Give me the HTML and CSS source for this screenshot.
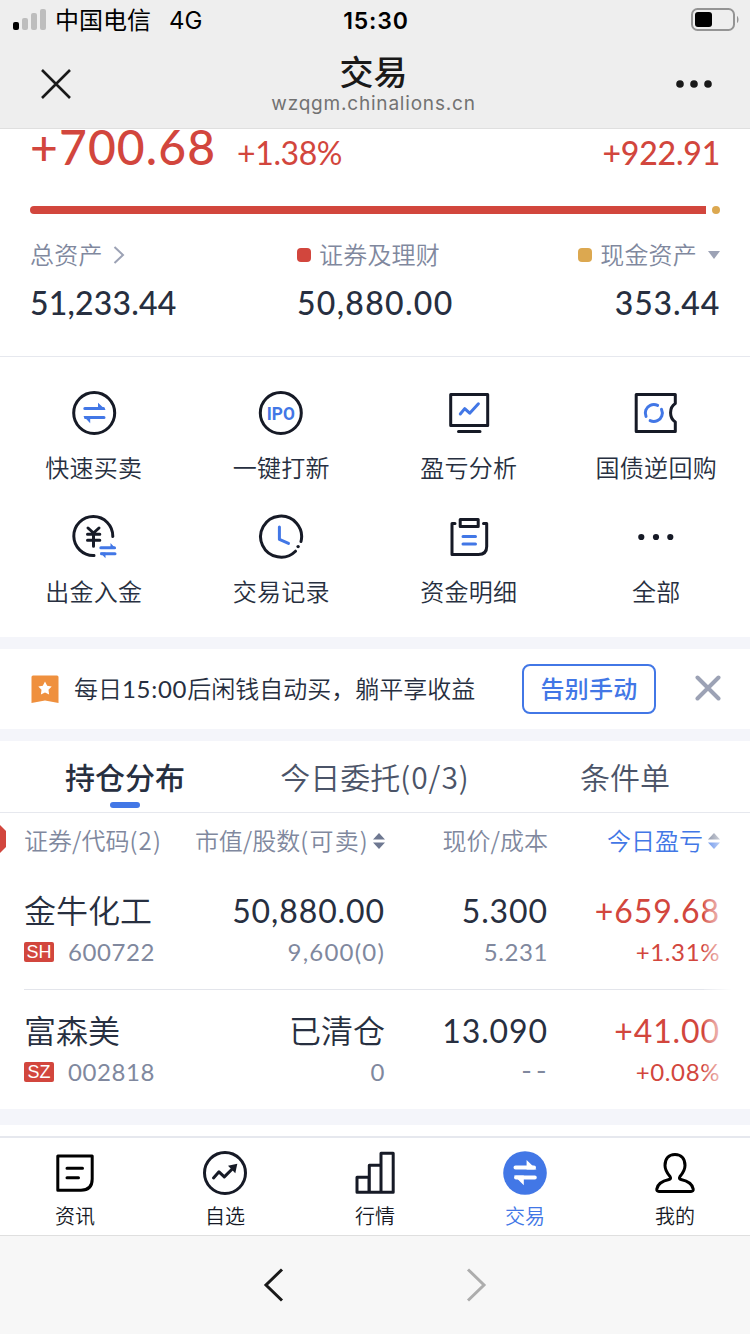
FILE: index.html
```html
<!DOCTYPE html>
<html lang="zh-CN">
<head>
    <meta charset="UTF-8">
    <meta name="viewport" content="width=device-width, initial-scale=1.0">
    <title>交易</title>
    <link rel="stylesheet" href="styles.css">
</head>
<body>
    <!-- Status bar -->
    <div class="status-bar">
        <div class="carrier">
            <svg class="signal" width="34" height="22" viewBox="0 0 34 22">
                <rect x="0" y="13" width="6" height="8" rx="2" fill="#000"/>
                <rect x="9" y="9" width="6" height="12" rx="2" fill="#bdbdbd"/>
                <rect x="18" y="4" width="6" height="17" rx="2" fill="#bdbdbd"/>
                <rect x="27" y="0" width="6" height="21" rx="2" fill="#bdbdbd"/>
            </svg>
            <span class="carrier-name">中国电信</span>
            <span class="network">4G</span>
        </div>
        <div class="time">15:30</div>
        <svg class="battery" width="48" height="24" viewBox="0 0 48 24">
            <rect x="1" y="1" width="42" height="21" rx="5.5" fill="none" stroke="#949494" stroke-width="2"/>
            <rect x="4" y="4" width="17" height="15" rx="3" fill="#000"/>
            <path d="M46 8c2 1 2 6 0 7z" fill="#949494"/>
        </svg>
    </div>

    <!-- Header -->
    <header class="header">
        <svg class="close" width="32" height="32" viewBox="0 0 32 32">
            <path d="M2 2L30 30M30 2L2 30"/>
        </svg>
        <div class="title-box">
            <h1>交易</h1>
            <p>wzqgm.chinalions.cn</p>
        </div>
        <svg class="more" width="38" height="10" viewBox="0 0 38 10">
            <circle cx="5" cy="5" r="3.8"/>
            <circle cx="19" cy="5" r="3.8"/>
            <circle cx="33" cy="5" r="3.8"/>
        </svg>
    </header>

    <!-- Assets -->
    <section class="assets">
        <div class="profit">
            <span class="profit-main">+700.68</span>
            <span class="profit-rate">+1.38%</span>
            <span class="profit-today">+922.91</span>
        </div>
        <div class="ratio">
            <div class="ratio-stock"></div>
            <div class="ratio-cash"></div>
        </div>
        <div class="asset-list">
            <div class="asset">
                <div class="asset-label">总资产
                    <svg class="arrow" width="12" height="20" viewBox="0 0 12 20"><path d="M1.5 2L10 10L1.5 18"/></svg>
                </div>
                <div class="asset-value total">51,233.44</div>
            </div>
            <div class="asset">
                <div class="asset-label"><i class="dot red"></i>证券及理财</div>
                <div class="asset-value">50,880.00</div>
            </div>
            <div class="asset asset-right">
                <div class="asset-label"><i class="dot gold"></i>现金资产<i class="caret"></i></div>
                <div class="asset-value cash">353.44</div>
            </div>
        </div>
    </section>

    <!-- Menu -->
    <section class="menu">
        <div class="menu-item">
            <svg class="icon" viewBox="0 0 48 48">
                <circle cx="24.2" cy="24" r="20.5"/>
                <path class="blue" d="M14.8 19.4H33.5M15.5 28.6H34"/>
                <path class="blue-fill" d="M28 13.7L35.8 20.9H28zM20.2 34.3L13.3 27.1H20.2z"/>
            </svg>
            <span>快速买卖</span>
        </div>
        <div class="menu-item">
            <svg class="icon" viewBox="0 0 48 48">
                <circle cx="23.8" cy="24" r="20.5"/>
                <text class="ipo" x="23.8" y="30.8" text-anchor="middle" textLength="28" lengthAdjust="spacingAndGlyphs">IPO</text>
            </svg>
            <span>一键打新</span>
        </div>
        <div class="menu-item">
            <svg class="icon" viewBox="0 0 48 48">
                <path d="M5.7 5.5H42.7V36.5H5.7zM13.5 42.5H35"/>
                <path class="blue" d="M15.3 25L19.7 19.6L24.7 24.2L33.4 14.8"/>
            </svg>
            <span>盈亏分析</span>
        </div>
        <div class="menu-item">
            <svg class="icon" viewBox="0 0 48 48">
                <path d="M43.3 5.5H4.2V42.5H43.3V33C37 29 37 18.5 43.3 14.5z"/>
                <circle class="blue" cx="21.8" cy="24" r="8.5" stroke-dasharray="20.7 6" transform="rotate(-25 21.8 24)"/>
            </svg>
            <span>国债逆回购</span>
        </div>
        <div class="menu-item">
            <svg class="icon" viewBox="0 0 48 48">
                <path d="M42.8 23.5A19.5 19.5 0 1 0 24 42.5"/>
                <path d="M18 15L23.5 20L29 15M17.5 21.2H29.8M17.5 27.2H29.8M23.5 21V33.2"/>
                <path class="blue" d="M30.8 34.7H44.5M31.5 40.7H45"/>
                <path class="blue-fill" d="M40.5 30L46 36H40.5zM35.5 45.3L30 39.5H35.5z"/>
            </svg>
            <span>出金入金</span>
        </div>
        <div class="menu-item">
            <svg class="icon" viewBox="0 0 48 48">
                <path d="M44 28.5A20.5 20.5 0 1 0 38.5 38.2"/>
                <circle class="dark-fill" cx="41.1" cy="33.6" r="1.7"/>
                <path class="blue" d="M22.4 14V26.4L31.5 30.4"/>
            </svg>
            <span>交易记录</span>
        </div>
        <div class="menu-item">
            <svg class="icon" viewBox="0 0 48 48">
                <path d="M10 10.5H7V41.5H33.5Q41.7 41.5 41.7 33.5V10.5H38.5"/>
                <rect x="15.2" y="6.5" width="18" height="7"/>
                <path class="blue" d="M18 23.5H30.5M18 31H30.5"/>
            </svg>
            <span>资金明细</span>
        </div>
        <div class="menu-item">
            <svg class="icon" viewBox="0 0 48 48">
                <g class="dark-fill"><circle cx="9.3" cy="24" r="3.1"/><circle cx="24" cy="24" r="3.1"/><circle cx="38.3" cy="24" r="3.1"/></g>
            </svg>
            <span>全部</span>
        </div>
    </section>

    <!-- Notice -->
    <section class="notice">
        <svg class="badge" width="28" height="29" viewBox="0 0 28 29">
            <path d="M2 .5H26Q27.5 .5 27.5 2V28L14 25.5L.5 28V2Q.5 .5 2 .5z" fill="#ef903e"/>
            <path d="M14 6.5L16.2 10.7L20.7 11.5L17.5 14.8L18.1 19.4L14 17.4L9.9 19.4L10.5 14.8L7.3 11.5L11.8 10.7z" fill="#fff"/>
        </svg>
        <span class="notice-text">每日<span class="clock">15:00</span>后闲钱自动买，躺平享收益</span>
        <button class="notice-btn">告别手动</button>
        <svg class="notice-close" width="26" height="26" viewBox="0 0 26 26"><path d="M2.5 2.5L23.5 23.5M23.5 2.5L2.5 23.5"/></svg>
    </section>

    <!-- Holdings -->
    <section class="holdings">
        <nav class="tabs">
            <div class="tab active">持仓分布</div>
            <div class="tab"><span>今日委托<span class="count">(0/3)</span></span></div>
            <div class="tab">条件单</div>
        </nav>
        <div class="table">
            <div class="tag"></div>
            <div class="thead">
                <div>证券/代码<span class="count">(2)</span></div>
                <div>市值/股数<span class="count">(可卖)</span><svg class="sort" width="12" height="16" viewBox="0 0 12 16"><path d="M0 6.5L6 0L12 6.5zM0 9.5H12L6 16z" fill="#6e7891"/></svg></div>
                <div>现价/成本</div>
                <div class="sorted">今日盈亏<svg class="sort" width="12" height="16" viewBox="0 0 12 16"><path d="M0 6.5L6 0L12 6.5z" fill="#6e7891"/><path d="M0 9.5H12L6 16z" fill="#4277e6"/></svg></div>
            </div>
            <div class="row">
                <div><p class="name">金牛化工</p><p class="code"><b>SH</b>600722</p></div>
                <div><p>50,880.00</p><p class="shares">9,600(0)</p></div>
                <div><p>5.300</p><p>5.231</p></div>
                <div class="up"><p>+659.68</p><p>+1.31%</p></div>
            </div>
            <div class="row">
                <div><p class="name">富森美</p><p class="code"><b>SZ</b>002818</p></div>
                <div><p class="name">已清仓</p><p>0</p></div>
                <div><p>13.090</p><p class="none">--</p></div>
                <div class="up"><p>+41.00</p><p>+0.08%</p></div>
            </div>
            <div class="fade"></div>
        </div>
    </section>

    <!-- Bottom navigation -->
    <nav class="bottom-nav">
        <div class="nav-item">
            <svg class="icon black" viewBox="0 0 48 48">
                <path d="M6.8 7H41.2V30Q41.2 41.2 30 41.2H6.8zM16 19.2H31.5M16 28.8H27.5"/>
            </svg>
            <span>资讯</span>
        </div>
        <div class="nav-item">
            <svg class="icon" viewBox="0 0 48 48">
                <circle cx="24" cy="24" r="20.5"/>
                <path d="M12.5 29L18 22.8L23.3 27.9L32 19.2"/>
                <path class="dark-fill" d="M36.3 14.8L27 16.8L34.3 24.3z"/>
            </svg>
            <span>自选</span>
        </div>
        <div class="nav-item">
            <svg class="icon" viewBox="0 0 48 48">
                <path d="M6 28.3H18V43.2H6zM18.3 16.3H30V43.2H18.3zM30 4.3H42.2V43.2H30z"/>
            </svg>
            <span>行情</span>
        </div>
        <div class="nav-item active">
            <svg class="icon" viewBox="0 0 48 48">
                <circle class="blue-fill" cx="24" cy="24" r="21.8"/>
                <path class="white" d="M14.5 18.5H33M15 28.5H33.8"/>
                <path class="white-fill" d="M25.6 11L35.5 20.5H25.6zM22.8 36.2L13 26.5H22.8z"/>
            </svg>
            <span>交易</span>
        </div>
        <div class="nav-item">
            <svg class="icon black" viewBox="0 0 48 48">
                <path d="M24 5.5C17.5 5.5 14 10 14 16.5C14 21.5 16 24 19 27.5Q20.5 30 18 30.5C11 32 6.5 35.5 5.8 40Q5.5 42.5 8 42.5H40Q42.5 42.5 42.2 40C41.5 35.5 37 32 30 30.5Q27.5 30 29 27.5C32 24 34 21.5 34 16.5C34 10 30.5 5.5 24 5.5z"/>
            </svg>
            <span>我的</span>
        </div>
    </nav>

    <!-- Browser bar -->
    <footer class="browser-bar">
        <svg width="22" height="36" viewBox="0 0 22 36"><path d="M19 2.5L3 18L19 33.5" stroke="#191919"/></svg>
        <svg width="22" height="36" viewBox="0 0 22 36"><path d="M3 2.5L19 18L3 33.5" stroke="#adadad"/></svg>
    </footer>
</body>
</html>
```
FILE: styles.css
```css
* {
    box-sizing: border-box;
}
body {
    width: 750px;
    height: 1334px;
    margin: 0;
    overflow: hidden;
    background: #fff;
    color: #272f40;
    font-family: Lato, "Noto Sans CJK SC", sans-serif;
    font-weight: 350;
}
h1, p {
    margin: 0;
}
svg {
    display: block;
    flex: none;
}

/* Status bar */
.status-bar {
    display: grid;
    grid-template-columns: 1fr auto 1fr;
    align-items: center;
    height: 40px;
    padding: 0 11px 0 13px;
    background: #eee;
    color: #000;
    font-family: Inter, "Noto Sans CJK SC", sans-serif;
}
.carrier {
    display: flex;
    align-items: center;
    font-size: 24px;
    line-height: 38px;
    font-weight: 400;
}
.signal {
    margin-top: -1px;
}
.carrier-name, .network {
    padding-top: 2px;
}
.carrier-name {
    margin-left: 8px;
}
.network {
    margin-left: 18px;
}
.time {
    padding-top: 2px;
    font-size: 23px;
    font-weight: 600;
    letter-spacing: 0.8px;
}
.battery {
    justify-self: end;
}

/* Header */
.header {
    display: flex;
    align-items: center;
    justify-content: space-between;
    height: 89px;
    padding: 0 37px 0 40px;
    background: #eee;
    border-bottom: 1px solid #dfdfdf;
}
.close {
    fill: none;
    stroke: #191919;
    stroke-width: 2.6;
}
.more {
    fill: #191919;
}
.title-box {
    margin-top: -1px;
    text-align: center;
}
.title-box h1 {
    font-size: 34px;
    line-height: 40px;
    font-weight: 500;
    color: #191919;
}
.title-box p {
    padding-top: 1px;
    font-family: Inter, sans-serif;
    font-size: 19px;
    line-height: 22px;
    font-weight: 400;
    letter-spacing: 0.8px;
    color: #727272;
}

/* Assets */
.assets {
    display: flow-root;
    height: 228px;
    padding: 0 30px;
    border-bottom: 1px solid #e6e8ee;
}
.profit {
    display: flex;
    align-items: baseline;
    height: 77px;
    margin-top: -11px;
    color: #d2463d;
    font-weight: 500;
    line-height: 58px;
}
.profit-main {
    font-size: 48px;
    letter-spacing: 1.1px;
}
.profit-rate {
    margin-left: 21px;
    font-size: 32px;
    font-weight: 400;
    letter-spacing: -0.4px;
}
.profit-today {
    margin-left: auto;
    font-size: 32px;
    letter-spacing: -0.2px;
}
.ratio {
    display: flex;
    gap: 6px;
    margin-top: 11px;
}
.ratio-stock {
    flex: 1;
    height: 8px;
    background: #d2463d;
    border-radius: 4px 0 0 4px;
}
.ratio-cash {
    width: 8px;
    height: 8px;
    border-radius: 4px;
    background: #dca850;
}
.asset-list {
    display: grid;
    grid-template-columns: 267px 1fr 1fr;
    margin-top: 23px;
}
.asset-label {
    display: flex;
    align-items: center;
    height: 36px;
    font-size: 24px;
    line-height: 36px;
    letter-spacing: 0.2px;
    color: #80889e;
}
.asset-value {
    margin-top: 8px;
    font-size: 32px;
    line-height: 44px;
    font-weight: 500;
    letter-spacing: 1.3px;
}
.total {
    letter-spacing: 0.2px;
}
.cash {
    letter-spacing: 0.8px;
}
.asset-right {
    text-align: right;
}
.asset-right .asset-label {
    justify-content: flex-end;
}
.arrow {
    margin-left: 10px;
    fill: none;
    stroke: #9ca2b5;
    stroke-width: 2;
}
.dot {
    width: 14px;
    height: 14px;
    margin-right: 8px;
    border-radius: 4px;
}
.red {
    background: #d2463d;
}
.gold {
    background: #dca850;
}
.caret {
    margin-left: 11px;
    border: 6px solid transparent;
    border-top: 8px solid #9ca2b5;
    border-bottom: 0;
}

/* Menu */
.menu {
    display: grid;
    grid-template-columns: repeat(4, 1fr);
    grid-auto-rows: 124px;
    height: 280px;
    padding-top: 32px;
}
.menu-item, .nav-item {
    display: flex;
    flex-direction: column;
    align-items: center;
}
.menu-item span {
    margin-top: 13px;
    font-size: 24px;
    line-height: 36px;
    letter-spacing: 0.3px;
}
.icon {
    width: 48px;
    height: 48px;
    fill: none;
    stroke: #161a26;
    stroke-width: 3;
    stroke-linejoin: round;
    stroke-linecap: round;
}
.black {
    stroke: #000;
}
.blue {
    stroke: #4277e6;
}
.blue-fill {
    fill: #4277e6;
    stroke: none;
}
.dark-fill {
    fill: #161a26;
    stroke: none;
}
.white {
    stroke: #fff;
    stroke-width: 4;
}
.white-fill {
    fill: #fff;
    stroke: none;
}
.ipo {
    font: bold 19px Roboto, sans-serif;
    fill: #4277e6;
    stroke: none;
}

/* Notice */
.notice {
    display: flex;
    align-items: center;
    height: 104px;
    padding: 0 29px 0 31px;
    border-top: 12px solid #f4f5fa;
    border-bottom: 12px solid #f4f5fa;
}
.notice-text {
    margin: -3px 0 0 15px;
    font-size: 24px;
    white-space: nowrap;
}
.clock {
    font-weight: 400;
    letter-spacing: 0.7px;
}
.notice-btn {
    width: 134px;
    height: 50px;
    margin-left: auto;
    padding: 0 0 4px;
    background: #fff;
    border: 2px solid #4277e6;
    border-radius: 8px;
    color: #4277e6;
    font: 500 24px "Noto Sans CJK SC", sans-serif;
    letter-spacing: 0.3px;
}
.notice-close {
    margin: -2px 0 0 39px;
    fill: none;
    stroke: #9ca2b5;
    stroke-width: 4;
    stroke-linecap: round;
}

/* Holdings */
.tabs {
    display: grid;
    grid-template-columns: repeat(3, 250px);
    height: 72px;
    border-bottom: 1px solid #e6e8ee;
}
.tab {
    display: flex;
    flex-direction: column;
    align-items: center;
    height: 71px;
    padding-top: 12px;
    font-family: "Noto Sans CJK SC", sans-serif;
    font-size: 30px;
    line-height: 46px;
    color: #4b5468;
}
.tab .count {
    letter-spacing: 1px;
}
.tab.active {
    font-weight: 500;
    color: #272f40;
}
.tab.active::after {
    content: "";
    width: 30px;
    height: 6px;
    margin-top: 3px;
    border-radius: 3px;
    background: #4277e6;
}
.table {
    position: relative;
    height: 312px;
    padding-left: 24px;
    border-bottom: 16px solid #f4f5fa;
}
.tag {
    position: absolute;
    left: 0;
    top: 12px;
    width: 6px;
    height: 28px;
    background: #d2463d;
    clip-path: polygon(0 0, 100% 6px, 100% 22px, 0 100%);
}
.thead, .row {
    display: grid;
    grid-template-columns: 150px 211px 163px 172px;
    text-align: right;
}
.thead {
    height: 56px;
    padding-bottom: 2px;
    font-family: "Noto Sans CJK SC", sans-serif;
    font-size: 24px;
    line-height: 54px;
    color: #80889e;
    white-space: nowrap;
}
.thead div {
    display: flex;
    align-items: center;
    justify-content: flex-end;
}
.thead div:first-child {
    justify-content: flex-start;
}
.thead .count {
    letter-spacing: 1.2px;
}
.thead .sorted {
    color: #4277e6;
}
.sort {
    margin: 2px 0 0 5px;
}
.thead .count + .sort {
    margin-left: 4px;
}
.row {
    height: 120px;
    padding-top: 18px;
}
.row + .row {
    padding-top: 17px;
    border-top: 1px solid #e3e5eb;
}
.row p {
    font-size: 32px;
    line-height: 48px;
    font-weight: 400;
    letter-spacing: 0.9px;
}
.row .name {
    font-weight: 350;
    letter-spacing: 0;
}
.row p + p {
    font-size: 24px;
    line-height: 34px;
    letter-spacing: 0.6px;
    color: #80889e;
}
.row p + .shares {
    letter-spacing: 1.2px;
}
.row p + .none {
    font-family: "Liberation Mono", monospace;
    font-size: 26px;
    letter-spacing: -1px;
}
.row div:first-child {
    text-align: left;
}
.row .up p {
    color: #d2463d;
}
.row .code {
    display: flex;
    align-items: center;
}
.code b {
    width: 30px;
    height: 20px;
    margin-right: 14px;
    border-radius: 2px;
    background: #d2463d;
    color: #fff;
    font: 400 18px/20px "Liberation Sans", sans-serif;
    letter-spacing: 0;
    text-align: center;
}
.fade {
    position: absolute;
    top: 0;
    right: 0;
    width: 46px;
    height: 296px;
    background: linear-gradient(to right, rgba(255, 255, 255, 0.15), #fff 60%);
}

/* Bottom navigation */
.bottom-nav {
    display: grid;
    grid-template-columns: repeat(5, 1fr);
    height: 100px;
    margin-top: 11px;
    padding-top: 11px;
    border-top: 2px solid #e6e8ee;
    border-bottom: 1px solid #dfdfdf;
}
.nav-item span {
    margin-top: 4px;
    font-size: 20px;
    line-height: 30px;
    color: #161a26;
}
.nav-item.active span {
    color: #4277e6;
}

/* Browser bar */
.browser-bar {
    display: flex;
    justify-content: center;
    gap: 180px;
    height: 98px;
    padding-top: 31px;
    background: #f7f7f7;
}
.browser-bar svg {
    fill: none;
    stroke-width: 3;
}
```
